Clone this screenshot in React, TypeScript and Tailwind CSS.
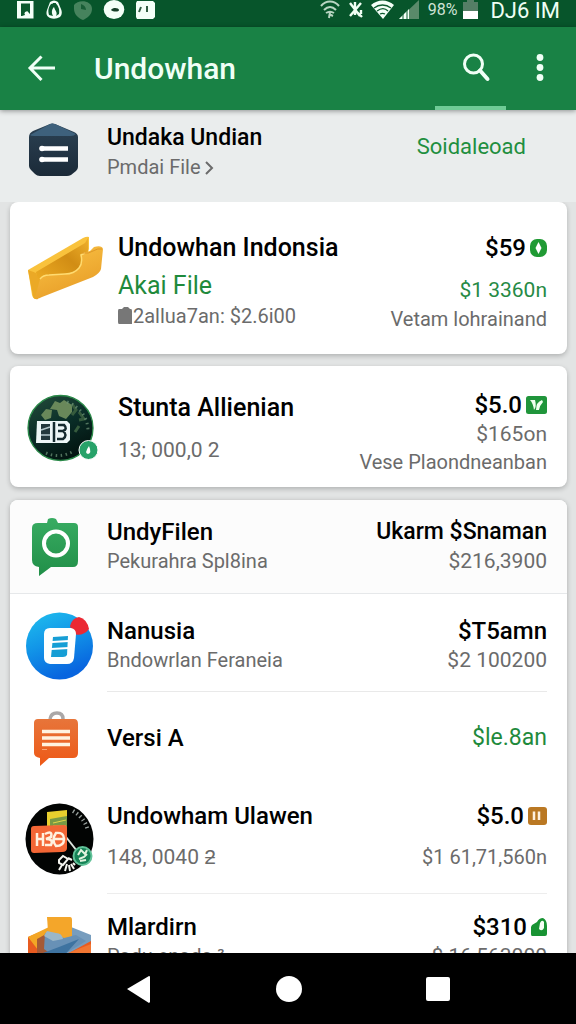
import type { ReactNode } from "react";

function BackArrow() {
  return (
    <svg width="32" height="32" viewBox="0 0 32 32" fill="none" stroke="#f0fff6" strokeWidth="3">
      <path d="M15.500 3.500 4 15l11.500 12M4.500 15H29" />
    </svg>
  );
}

function SearchIcon() {
  return (
    <svg width="32" height="32" viewBox="0 0 32 32" fill="none" stroke="#f0fff6">
      <circle cx="12.500" cy="11" r="9" strokeWidth="3" />
      <path d="m19 17.500 7.500 8.500" strokeWidth="4" strokeLinecap="round" />
    </svg>
  );
}

function MoreIcon() {
  return (
    <svg width="10" height="32" viewBox="0 0 10 32" fill="#f0fff6">
      <circle cx="5" cy="4.500" r="3.400" />
      <circle cx="5" cy="14.500" r="3.400" />
      <circle cx="5" cy="24.500" r="3.400" />
    </svg>
  );
}

function StatusLeft() {
  return (
    <svg width="140" height="20" viewBox="0 0 140 20" fill="none">
      <path d="M1 1h16.500v17.500H1z" fill="#f4fff8" />
      <path d="M5 3.500h9V14l-3-3-2 4-3 1H5z" fill="#0b5a2e" />
      <circle cx="10.500" cy="13.500" r="2" fill="#f4fff8" />
      <path d="M34 2q4-3 8 0l3 7q2 5-1 8-5 3-10 1-5-2-3-8z" fill="#f4fff8" />
      <path d="M35 4c-3 4-3 7-2 11l4 1c-2-4-1-7 1-9 1 4 4 5 2 9l3-2c1-5-1-9-4-11z" fill="#0b5a2e" />
      <path d="M37 3h3l-1 4h-2z" fill="#0b5a2e" />
      <path d="M58 5c4-6 18-5 18 4 0 6-5 9-9 11-5-2-9-6-9-11z" fill="#46835d" />
      <path d="M65 4v5l5 1c0-3-2-5-5-6z" fill="#185d36" />
      <ellipse cx="98" cy="9.500" rx="10.300" ry="9.500" fill="#f4fff8" />
      <path d="M95 10c2-3 8-2 8 0s-6 2-8 0z" fill="#173f29" />
      <path d="M121 1h16l2 2v14l-2 2h-16l-1-2V3z" fill="#f4fff8" />
      <path d="m125 7-2 5m8-6v6" stroke="#315d42" strokeWidth="2" />
    </svg>
  );
}

function StatusRight() {
  return (
    <svg width="100" height="20" viewBox="0 0 100 20" fill="none">
      <g stroke="#b8d5c2" strokeWidth="2">
        <path d="M1 6c5-6 13-6 18 0M4 10c4-4 8-4 12 0M6 13c3-2 5-2 8 0" />
        <path d="m10 12-1 6m0-4 4 2" />
      </g>
      <path d="m30 3 10 13M41 3 30 16M35 2v13m2-3 5 5m-1-7v4" stroke="#f0fff4" strokeWidth="2.400" />
      <path d="M51 5c7-6 16-6 23 0L63 19z" fill="#f4fff8" />
      <path d="M54 8c5-4 12-4 17 0m-14 3c4-3 8-3 11 0m-8 3c2-1 3-1 5 0" stroke="#0b5a2e" strokeWidth="1.300" />
      <path d="M79 19 99 0v19z" fill="#5a8a6a" />
      <path d="m79 19 10-10v10z" fill="#f4fff8" />
      <path d="M83 13v6m4-10v10" stroke="#0b5a2e" />
    </svg>
  );
}

function BatteryIcon() {
  return (
    <svg width="15" height="20" viewBox="0 0 15 20">
      <path d="M0 2h4V0h7v2h4v10H0z" fill="#557e66" />
      <path d="M0 11h15v8H0z" fill="#fff" />
    </svg>
  );
}

function HexDocIcon() {
  return (
    <svg width="50" height="54" viewBox="0 0 50 54">
      <defs>
        <linearGradient id="hexBody" x1="0" y1="0" x2="0" y2="1">
          <stop offset="0" stopColor="#2c4254" />
          <stop offset="1" stopColor="#1b2a38" />
        </linearGradient>
      </defs>
      <path d="M0 14Q0 10 4 8L21 1q2-1 5 0l19 8q4 2 4 5v30q0 2-2 4l-5 4q-2 1-4 1H11q-3 0-5-2l-4-4q-2-2-2-4z" fill="url(#hexBody)" />
      <path d="M1 12 21 1q2-1 5 0l21 10q-2 2-5 2H5q-3 0-4-1z" fill="#3e617c" />
      <path d="M13 25.500h26M13 36.500h26" stroke="#fff" strokeWidth="4.500" />
      <circle cx="13" cy="25.500" r="2.800" fill="#fff" />
      <circle cx="13" cy="36.500" r="2.800" fill="#fff" />
    </svg>
  );
}

function GoldWalletIcon() {
  return (
    <svg width="78" height="66" viewBox="0 0 78 66">
      <defs>
        <linearGradient id="goldBack" x1="0" y1="1" x2="1" y2="0">
          <stop offset="0" stopColor="#f0ae25" />
          <stop offset=".6" stopColor="#d18d14" />
          <stop offset="1" stopColor="#efb02c" />
        </linearGradient>
        <linearGradient id="goldFront" x1="0" y1="0" x2=".5" y2="1">
          <stop offset="0" stopColor="#fbc547" />
          <stop offset="1" stopColor="#e89e28" />
        </linearGradient>
      </defs>
      <path d="M1 34 56 2q4-2 6-1v12l-8 27-45 23q-3 0-4-4z" fill="#f9c23c" />
      <path d="m9 36 49-29 3-5v16l-8 20-42 12z" fill="url(#goldBack)" />
      <path d="M1 34q6 2 8 3l5 12-3 14q-4 1-5-3z" fill="#eba926" />
      <path d="m8 62 5-19q3-4 9-4l16-1q9 0 14-6 4-5 2-13 2-3 9-4l4-4q8-2 9 2l-2 20q-1 4-8 8L15 61q-5 3-7 1z" fill="url(#goldFront)" />
      <path d="m13 43q3-4 9-4l16-1q9 0 14-6 4-5 2-13l4-2" fill="none" stroke="#ffdb70" strokeWidth="1.500" />
      <path d="M55 17q7 1 11-2 5-3 9-2" fill="none" stroke="#df9827" />
    </svg>
  );
}

function CoinIcon() {
  return (
    <svg width="72" height="68" viewBox="0 0 72 68">
      <defs>
        <linearGradient id="coinFill" x1="0" y1="0" x2=".5" y2="1">
          <stop offset="0" stopColor="#254d3b" />
          <stop offset=".55" stopColor="#0a2e28" />
          <stop offset="1" stopColor="#031511" />
        </linearGradient>
      </defs>
      <circle cx="33.500" cy="34" r="32.500" fill="url(#coinFill)" stroke="#2b8a49" strokeWidth="1.300" />
      <path d="m28 7 5 2 4-3 8 5v7l-6 7-7-3-2-6-7-1zM19 15l6 1-1 8-6 2-4-5z" fill="#69885a" />
      <path d="m45 10 4 6-4 5m7-3 5 7-5 1m-13 2-5 3m18 1-4 6" stroke="#365b3d" strokeWidth="3" fill="none" />
      <path d="M40 8q20 8 21 28M19 59q14 6 28-2" fill="none" stroke="#71977a" strokeWidth="3" strokeDasharray="1.500 3.500" opacity=".7" />
      <path d="M10 27h30l3 3v16l-3 3H9z" fill="#edf7f7" />
      <path d="M14 30h9v16h-9z" fill="#23383c" />
      <path d="m14 36 9-3m-9 8h9" stroke="#b5c8cb" strokeWidth="1.500" />
      <path d="M27 28v20M31 31h6q4 4-1 6h-5m5 0q5 4 0 8h-6" fill="none" stroke="#152b2f" strokeWidth="2.500" />
      <circle cx="61.500" cy="56" r="9.500" fill="#27a269" stroke="#fff" />
      <path d="M62 52q-5 7-1 8 4-1 1-8z" fill="#fff" />
    </svg>
  );
}

function ChatRingIcon() {
  return (
    <svg width="68" height="60" viewBox="0 0 68 60">
      <defs>
        <linearGradient id="ringFill" x1="0" y1="0" x2="0" y2="1">
          <stop offset="0" stopColor="#38ac62" />
          <stop offset="1" stopColor="#218f48" />
        </linearGradient>
      </defs>
      <path d="M12 6h9l1-4q4-2 8 0l2 4h16q4 0 4 4v34q0 6-5 6H25l-12 9v-9q-7-1-7-7V11q0-5 6-5z" fill="url(#ringFill)" />
      <circle cx="30" cy="26.500" r="12" fill="none" stroke="#fff" strokeWidth="4" />
    </svg>
  );
}

function BlueDocIcon() {
  return (
    <svg width="68" height="70" viewBox="0 0 68 70">
      <defs>
        <linearGradient id="blueFill" x1="0" y1="0" x2=".4" y2="1">
          <stop offset="0" stopColor="#20c0ee" />
          <stop offset=".5" stopColor="#1296e8" />
          <stop offset="1" stopColor="#0865df" />
        </linearGradient>
      </defs>
      <circle cx="33.500" cy="35" r="33.500" fill="url(#blueFill)" />
      <path d="M44 15q2-8 9-9 8 2 10 12-6 8-16 5z" fill="#eb2934" />
      <path d="M24 17h21q5 1 5 6l-2 24q-1 6-7 6H24q-6-1-6-6V23q0-6 6-6z" fill="#fcffff" />
      <path d="m27 26 15-1-1 19q-1 2-4 2H25z" fill="#149ed5" />
      <path d="m26 31 17-1M25 38l18-1" stroke="#fff" strokeWidth="2" />
    </svg>
  );
}

function OrangeChatIcon() {
  return (
    <svg width="68" height="56" viewBox="0 0 68 56">
      <defs>
        <linearGradient id="orangeFill" x1="0" y1="0" x2="0" y2="1">
          <stop offset="0" stopColor="#e7753a" />
          <stop offset="1" stopColor="#ee5816" />
        </linearGradient>
      </defs>
      <path d="M24 9q1-6 7-6t6 6" fill="none" stroke="#aaa7a7" strokeWidth="3.500" />
      <path d="M12 9h36q4 0 4 5v29q0 5-5 5H23l-9 8v-8q-6-1-6-5V13q0-4 4-4z" fill="url(#orangeFill)" />
      <path d="M16 21.500h28M16 28h28M16 34.500h28" stroke="#fff2df" strokeWidth="3.500" />
      <path d="M16 39.500h5" stroke="#f8a575" />
    </svg>
  );
}

function BlackCoinIcon() {
  return (
    <svg width="68" height="72" viewBox="0 0 68 72" overflow="visible">
      <ellipse cx="33.500" cy="36" rx="34" ry="35.500" fill="#020403" />
      <path d="m21 9 20-2v22l-20 2z" fill="#e8cf2e" />
      <path d="m24 16 17-3v13H24z" fill="#799a45" />
      <path d="m27 20 13-3m-13 6h13" stroke="#e3d649" />
      <path d="M47 8q12 7 15 20" fill="none" stroke="#9ba3a0" strokeWidth="4" strokeDasharray="1.300 3" />
      <path d="m40 34 11 14" stroke="#dce5df" strokeWidth="2" />
      <path d="m8 23 30-1q3 0 3 3v20q0 4-5 4L8 50q-3 0-3-3V26q0-3 3-3z" fill="#f36635" />
      <path d="M11 30v13m0-7h6m0-6v13m2-12q8-4 6 3l-5 2q8 0 5 6h-6m11-12q8-1 8 6t-8 7q-5-6 0-13zm-3 6h10" fill="none" stroke="#fff1df" strokeWidth="2.500" />
      <circle cx="56.500" cy="53" r="9" fill="#168357" stroke="#62c299" strokeWidth="2" />
      <path d="m52 52 3-5 4 4 2-4m-8 9 5-2 3-3m-7 7 6-1" fill="none" stroke="#e2f3df" strokeWidth="2" />
      <path d="m33 57 4-4 5 3-5 6-4-2zm9-2 4 2m-10 5-3 5m8-6-2 7m4-6 1 6m1-7 3 5m1-4-2-2" fill="none" stroke="#f4f5ef" strokeWidth="2" />
    </svg>
  );
}

function BoxIcon() {
  return (
    <svg width="68" height="56" viewBox="0 0 68 56">
      <path d="m2 21 24-10 39 9v32L34 56 2 51z" fill="#e85b20" />
      <path d="m2 21 21-10 5 15-16 8z" fill="#f3a625" />
      <path d="m40 9 25 10v6L43 37l-26 1z" fill="#779dbe" />
      <path d="m11 23 9-5 10 10-11 14-8-5z" fill="#a45a37" />
      <path d="m19 17 12 6 19-4 10 6-18 11-13 5-11-8z" fill="#6891b6" />
      <path d="m17 37 16-6 20-8-18 20z" fill="#3e73a0" />
      <path d="m37 39 28-11v24L36 55z" fill="#f27632" />
      <path d="M21 1h23q2 0 2 3v16l-8 2-16-7z" fill="#f4a62a" />
      <path d="m21 15 9 2q6 0 7 6l-10 2-9-5z" fill="#9bb7c8" />
    </svg>
  );
}

function DropBadge() {
  return (
    <svg width="17" height="18" viewBox="0 0 17 18">
      <rect width="17" height="18" rx="7" fill="#209a34" />
      <path d="m8.500 3 3 6-3 6-3-6z" fill="#fff" />
    </svg>
  );
}

function LeafBadge() {
  return (
    <svg width="21" height="18" viewBox="0 0 21 18">
      <rect width="21" height="18" rx="2.500" fill="#20953b" />
      <path d="M4 4q3 3 4 10 3-3 1-10M10 14q0-8 6-10l1 2q-3 3-4 8z" fill="#effff0" />
    </svg>
  );
}

function PauseBadge() {
  return (
    <svg width="19" height="18" viewBox="0 0 19 18">
      <rect width="19" height="18" rx="3" fill="#ba7823" />
      <path d="M6 4.500V13m5-8.500V13" stroke="#fff1df" strokeWidth="2.500" />
    </svg>
  );
}

function BagBadge() {
  return (
    <svg width="16" height="18" viewBox="0 0 16 18">
      <path d="m1 7 5-3q2-4 6-4 4 2 4 8v8q0 2-2 2H1q-1 0-1-2V9z" fill="#189333" />
      <path d="M9 5q2-4 4-1v6q-2 4-5 1z" fill="#f4fff4" />
    </svg>
  );
}

function Amount({ children, badge }: { children: ReactNode; badge?: ReactNode }) {
  return (
    <p className="flex items-center justify-end gap-1 text-2xl leading-[30px] font-medium text-black">
      {children}
      {badge}
    </p>
  );
}

const rowTitle = "text-2xl leading-[30px] font-medium text-black";
const rowNote = "text-xl leading-[29px] text-[#6b6b6b]";
const rowFigure = "text-[21px] leading-[29px] text-[#6b6b6b]";

export default function App() {
  return (
    <div className="flex h-screen flex-col overflow-hidden bg-[#e2e4e4] font-['Roboto',sans-serif] whitespace-nowrap">
      <div className="flex h-[27px] shrink-0 items-start justify-between bg-[#07552b] px-4 text-white">
        <StatusLeft />
        <div className="flex items-start">
          <StatusRight />
          <span className="ml-2 text-base leading-5 text-[#cfe3d6]">98%</span>
          <span className="ml-1.5">
            <BatteryIcon />
          </span>
          <span className="ml-3 pt-px text-[22px] leading-5 text-[#eefff4]">DJ6 IM</span>
        </div>
      </div>

      <header className="z-10 flex h-[83px] shrink-0 bg-[#198245] pr-7 pl-[26px] shadow-[0_1px_5px_rgba(0,0,0,0.4)]">
        <button aria-label="Back" className="flex items-center">
          <BackArrow />
        </button>
        <h1 className="ml-9 flex flex-1 items-center text-3xl font-medium text-[#f0fff6]">Undowhan</h1>
        <button aria-label="Search" className="flex w-[71px] items-center justify-center border-b-4 border-[#6fcb96] pt-1 pl-3">
          <SearchIcon />
        </button>
        <button aria-label="More options" className="ml-[26px] flex w-4 items-center justify-center">
          <MoreIcon />
        </button>
      </header>

      <section className="flex h-[92px] shrink-0 items-start bg-[#eaeded] px-[10px] pt-[13px]">
        <span className="ml-[19px] w-[78px]">
          <HexDocIcon />
        </span>
        <div className="flex-1">
          <h2 className="text-[23px] leading-[30px] font-medium text-black">Undaka Undian</h2>
          <a href="#file" className={"flex items-center gap-1 " + rowNote}>
            Pmdai File
            <svg width="9" height="14" viewBox="0 0 9 14" fill="none" stroke="#6b6b6b" strokeWidth="2">
              <path d="m1 1 6 6-6 6" />
            </svg>
          </a>
        </div>
        <button className="mt-2 mr-10 text-[22px] leading-8 text-[#1f8f3f]">Soidaleoad</button>
      </section>

      <main className="min-h-0 flex-1 overflow-hidden pr-[9px] pl-[10px]">
        <section className="flex h-[152px] rounded-lg bg-white pt-[30px] pr-5 pl-4 shadow-[0_2px_5px_rgba(0,0,0,0.22)]">
          <span className="mt-1 w-[92px] pl-px">
            <GoldWalletIcon />
          </span>
          <div className="flex-1">
            <h2 className="text-[25px] leading-8 font-medium text-black">Undowhan Indonsia</h2>
            <p className="mt-1.5 text-[25px] leading-8 text-[#1f8a3c]">Akai File</p>
            <p className="flex items-center text-xl leading-7 text-[#6b6b6b]">
              <svg width="15" height="18" viewBox="0 0 15 18" fill="#777">
                <path d="M1 2h3l2-2h4l2 2h1q1 0 1 2v13H1Q0 17 0 15V4q0-2 1-2z" />
              </svg>
              2allua7an: $2.6i00
            </p>
          </div>
          <div className="text-right">
            <p className="flex items-center justify-end gap-1 text-2xl leading-8 font-medium text-black">
              $59
              <DropBadge />
            </p>
            <p className="mt-3 text-[21px] leading-[29px] text-[#268a45]">$1 3360n</p>
            <p className={rowNote}>Vetam lohrainand</p>
          </div>
        </section>

        <section className="mt-3 flex h-[121px] rounded-lg bg-white pt-6 pr-5 pl-4 shadow-[0_2px_5px_rgba(0,0,0,0.22)]">
          <span className="mt-1 w-[92px] pl-px">
            <CoinIcon />
          </span>
          <div className="flex-1">
            <h2 className="pt-0.5 text-[25px] leading-8 font-medium text-black">Stunta Allienian</h2>
            <p className="mt-3 text-[21px] leading-7 text-[#6b6b6b]">13; 000,0 2</p>
          </div>
          <div className="text-right">
            <Amount badge={<LeafBadge />}>$5.0</Amount>
            <p className="text-[21px] leading-7 text-[#6b6b6b]">$165on</p>
            <p className="text-xl leading-7 text-[#6b6b6b]">Vese Plaondneanban</p>
          </div>
        </section>

        <ul className="mt-[13px] overflow-hidden rounded-t-lg bg-white shadow-[0_1px_5px_rgba(0,0,0,0.25)]">
          <li className="flex h-[94px] border-b border-[#e6e8ea] bg-[#fcfcfc] pt-[17px] pr-5 pl-4">
            <span className="w-[81px]">
              <ChatRingIcon />
            </span>
            <div className="flex-1">
              <h2 className={rowTitle}>UndyFilen</h2>
              <p className={rowNote}>Pekurahra Spl8ina</p>
            </div>
            <div className="text-right">
              <p className="text-[23px] leading-[30px] font-medium text-black">Ukarm $Snaman</p>
              <p className={rowFigure}>$216,3900</p>
            </div>
          </li>
          <li className="flex h-[98px] pr-5 pl-4">
            <span className="w-[81px] pt-[17px]">
              <BlueDocIcon />
            </span>
            <div className="flex flex-1 justify-between border-b border-[#e9e9e9] pt-[22px]">
              <div>
                <h2 className={rowTitle}>Nanusia</h2>
                <p className={rowNote}>Bndowrlan Feraneia</p>
              </div>
              <div className="text-right">
                <Amount>$T5amn</Amount>
                <p className={rowFigure}>$2 100200</p>
              </div>
            </div>
          </li>
          <li className="flex h-[92px] items-center pr-5 pl-4">
            <span className="w-[81px]">
              <OrangeChatIcon />
            </span>
            <h2 className={"flex-1 " + rowTitle}>Versi A</h2>
            <p className="text-[23px] leading-[30px] text-[#1f8a3c]">$le.8an</p>
          </li>
          <li className="flex h-[110px] pr-5 pl-4">
            <span className="w-[81px] pt-[19px]">
              <BlackCoinIcon />
            </span>
            <div className="flex flex-1 justify-between border-b border-[#ededed] pt-[17px]">
              <div>
                <h2 className={rowTitle}>Undowham Ulawen</h2>
                <p className={"mt-3 " + rowFigure}>148, 0040 ƻ</p>
              </div>
              <div className="text-right">
                <Amount badge={<PauseBadge />}>$5.0</Amount>
                <p className={"mt-3 " + rowNote}>$1 61,71,560n</p>
              </div>
            </div>
          </li>
          <li className="flex h-[90px] pt-[18px] pr-5 pl-4">
            <span className="w-[81px] pt-1">
              <BoxIcon />
            </span>
            <div className="flex-1">
              <h2 className={rowTitle}>Mlardirn</h2>
              <p className={rowNote}>Padu enada ²</p>
            </div>
            <div className="text-right">
              <Amount badge={<BagBadge />}>$310</Amount>
              <p className={rowFigure}>$ 16,563000</p>
            </div>
          </li>
        </ul>
      </main>

      <nav className="flex h-[71px] shrink-0 items-center justify-center gap-[124px] bg-black">
        <button aria-label="Back">
          <svg width="26" height="28" viewBox="0 0 26 28">
            <path d="M1 14 23 1q1 0 1 1v25l-1 1z" fill="#fff" />
          </svg>
        </button>
        <button aria-label="Home" className="size-[26px] rounded-full bg-white" />
        <button aria-label="Recent apps" className="size-6 rounded-xs bg-white" />
      </nav>
    </div>
  );
}
